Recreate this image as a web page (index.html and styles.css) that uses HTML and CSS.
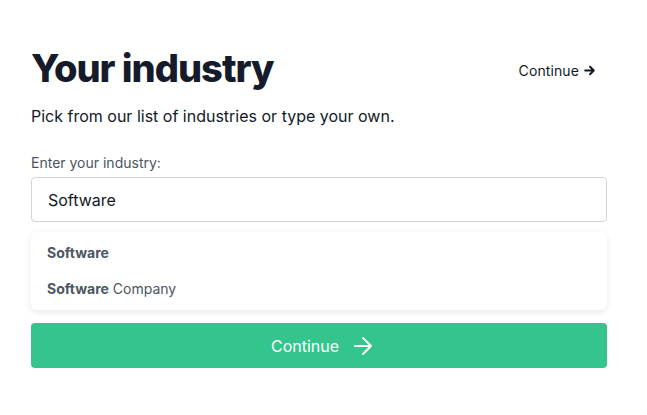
FILE: index.html
```html
<!DOCTYPE html>
<html>
<head>
<meta charset="utf-8">
<link rel="stylesheet" href="styles.css">
</head>
<body>
<div class="page">
  <div class="header">
    <h1 class="title">Your industry</h1>
    <a class="skip">Continue <svg class="skip-arrow" width="13" height="13" viewBox="0 0 24 24" fill="none" stroke="currentColor" stroke-width="3.6" stroke-linecap="round" stroke-linejoin="round"><path d="M4 12h16M13 5l7 7-7 7"/></svg></a>
  </div>
  <p class="lead">Pick from our list of industries or type your own.</p>
  <label class="label">Enter your industry:</label>
  <div class="input">Software</div>
  <ul class="menu">
    <li class="item"><b>Software</b></li>
    <li class="item"><b>Software</b> Company</li>
  </ul>
  <button class="btn">Continue <svg class="btn-arrow" width="24" height="24" viewBox="0 0 24 24" fill="none" stroke="currentColor" stroke-width="2" stroke-linecap="round" stroke-linejoin="round"><path d="M4 12h16M12 4l8 8-8 8"/></svg></button>
</div>
</body>
</html>
```
FILE: styles.css
```css
* { box-sizing: border-box; }
body { margin: 0; background: #fff; font-family: Inter, "Noto Sans", sans-serif; color: #111827; }
.page { width: 576px; margin-left: 31px; padding-top: 40px; display: flex; flex-direction: column; }
.header { display: flex; justify-content: space-between; align-items: center; height: 56px; }
.title { margin: 0; font-size: 38px; font-weight: 800; letter-spacing: -1px; color: #161b2b; line-height: 56px; }
.skip { display: flex; align-items: center; gap: 4px; font-size: 14px; color: #111827; margin-right: 11px; margin-top: 4px; letter-spacing: 0.1px; }
.lead { margin: 8px 0 0; font-size: 16px; line-height: 24px; color: #111827; }
.label { margin-top: 25px; font-size: 14px; line-height: 20px; color: #4b5563; }
.input { margin-top: 4px; height: 45px; border: 1px solid #d1d5db; border-radius: 4px; padding: 0 16px; display: flex; align-items: center; font-size: 16px; color: #111827; }
.menu { list-style: none; margin: 10px 0 0; padding: 3px 0; border-radius: 6px; box-shadow: 0 2px 6px rgba(0,0,0,0.1); }
.item { padding: 8px 16px; height: 36px; font-size: 14px; line-height: 20px; color: #4b5563; }
.item b { font-weight: 700; }
.btn { margin-top: 13px; height: 45px; border: 0; border-radius: 4px; background: #33c58d; color: #fff; font-family: Inter, sans-serif; font-size: 16px; display: flex; align-items: center; justify-content: center; gap: 12px; padding: 0 0 0 8px; }
```
